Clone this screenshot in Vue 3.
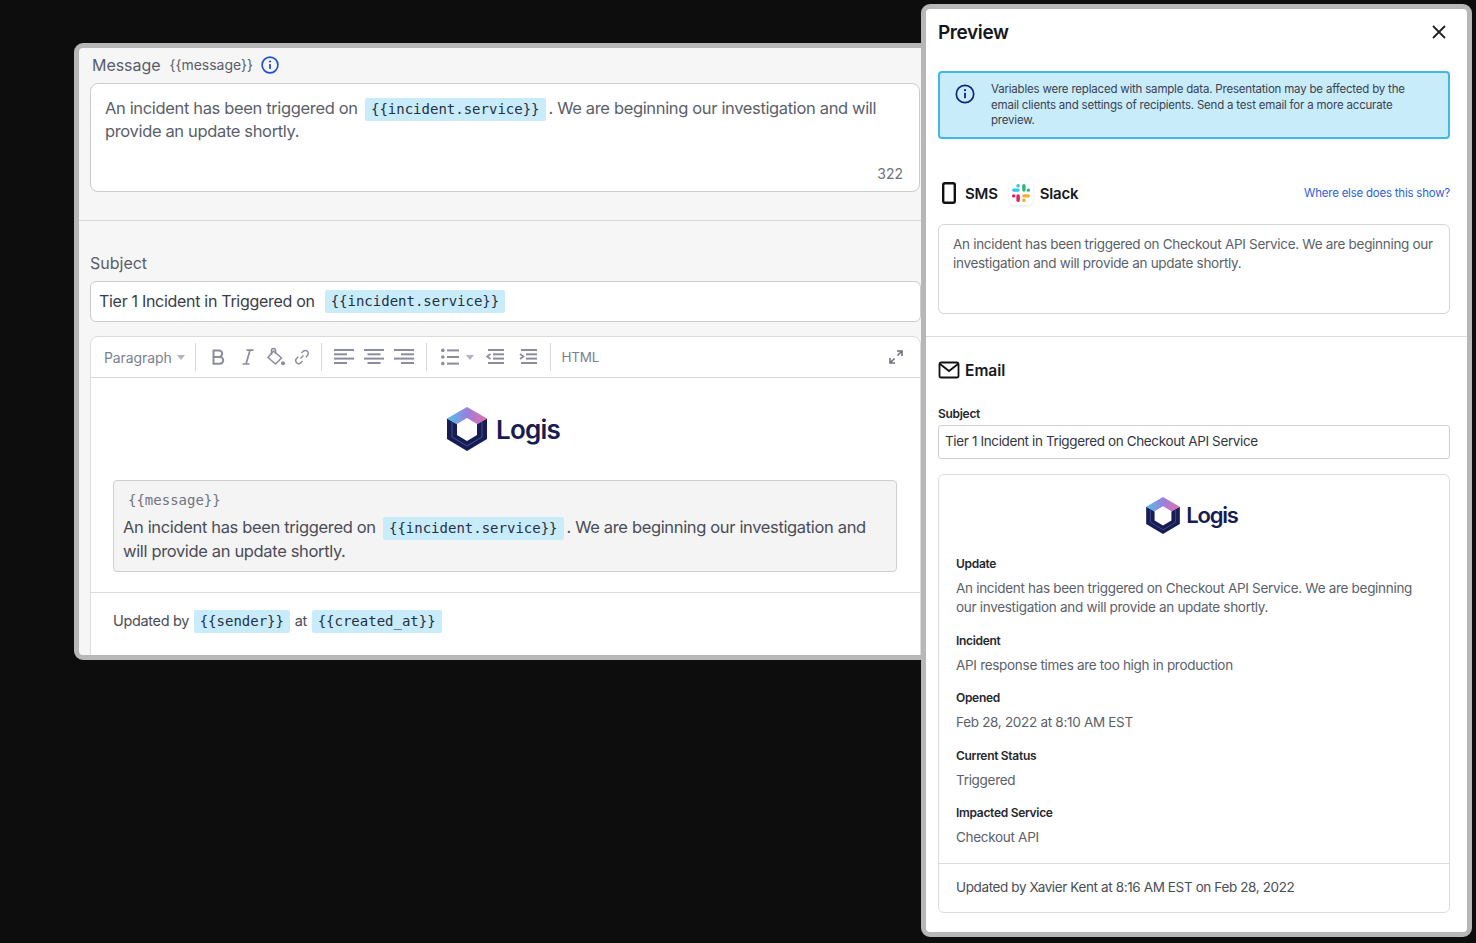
<script setup>
// mustache text has to come from script, the template parser would close on the braces
const MESSAGE = '{' + '{message}' + '}'
const SERVICE = '{' + '{incident.service}' + '}'
const SENDER = '{' + '{sender}' + '}'
const CREATED = '{' + '{created_at}' + '}'

const sections = [
  { label: 'Incident', text: 'API response times are too high in production' },
  { label: 'Opened', text: 'Feb 28, 2022 at 8:10 AM EST' },
  { label: 'Current Status', text: 'Triggered' },
  { label: 'Impacted Service', text: 'Checkout API' },
]
</script>

<template>
  <div class="stage">
    <!-- editor window -->
    <section class="editor-window">
      <div class="msg-head">
        <span class="msg-title">Message</span>
        <span class="msg-var">{{ MESSAGE }}</span>
        <svg class="info-blue" width="18" height="18" viewBox="0 0 18 18" fill="none">
          <circle cx="9" cy="9" r="7.9" stroke="#1f52c9" stroke-width="1.7" />
          <rect x="8.1" y="8" width="1.8" height="5" rx=".6" fill="#1f52c9" />
          <circle cx="9" cy="5.5" r="1.1" fill="#1f52c9" />
        </svg>
      </div>
      <div class="msg-box">
        <p class="msg-text">An incident has been triggered on <code class="token">{{ SERVICE }}</code>. We are beginning our investigation and will provide an update shortly.</p>
        <span class="counter">322</span>
      </div>
      <div class="divider"></div>
      <div class="subject-area">
        <label class="subject-label">Subject</label>
        <div class="subject-input"><span class="subj-text">Tier 1 Incident in Triggered on</span><code class="token">{{ SERVICE }}</code></div>
        <div class="editor">
          <div class="toolbar">
            <span class="tb-para">Paragraph</span>
            <span class="caret"></span>
            <i class="sep sep-1"></i>
            <svg class="ic ic-b" width="20" height="20" viewBox="0 0 20 20" fill="none" stroke="#8b8d9d" stroke-width="2"><path d="M5.5 3.5h5.5a3.2 3.2 0 0 1 0 6.4H5.5zM5.5 9.9h6.3a3.4 3.4 0 0 1 0 6.8H5.5z" /></svg>
            <svg class="ic ic-i" width="20" height="20" viewBox="0 0 20 20" fill="none" stroke="#8b8d9d" stroke-width="1.7"><path d="M8.5 3.2h7M4.5 17h7M12 3.2 8 17" /></svg>
            <svg class="ic ic-bucket" width="20" height="20" viewBox="0 0 20 20" fill="none" stroke="#8b8d9d" stroke-width="1.5"><path d="M7.5 4 15.5 11 9.5 17 2 10.5z" /><path d="M5.5 8V3.5a2 2 0 0 1 4 0V7" /><circle cx="17" cy="16.2" r="2" fill="#8b8d9d" stroke="none" /></svg>
            <svg class="ic ic-link" width="18" height="18" viewBox="0 0 18 18" fill="none" stroke="#8b8d9d" stroke-width="1.4"><path d="M7.5 10.5l3-3M8.5 5l1.7-1.7a2.9 2.9 0 0 1 4.2 4.2L12.9 9.3M9.5 13l-1.7 1.7a2.9 2.9 0 0 1-4.2-4.2L5.1 8.7" /></svg>
            <i class="sep sep-2"></i>
            <svg class="ic" width="20" height="18" viewBox="0 0 20 18" fill="#8b8d9d"><rect y="1" width="20" height="2" /><rect y="5.3" width="13" height="2" /><rect y="9.6" width="20" height="2" /><rect y="14" width="13" height="2" /></svg>
            <svg class="ic ic-gap" width="20" height="18" viewBox="0 0 20 18" fill="#8b8d9d"><rect y="1" width="20" height="2" /><rect x="3.5" y="5.3" width="13" height="2" /><rect y="9.6" width="20" height="2" /><rect x="3.5" y="14" width="13" height="2" /></svg>
            <svg class="ic ic-gap" width="20" height="18" viewBox="0 0 20 18" fill="#8b8d9d"><rect y="1" width="20" height="2" /><rect x="7" y="5.3" width="13" height="2" /><rect y="9.6" width="20" height="2" /><rect x="7" y="14" width="13" height="2" /></svg>
            <i class="sep sep-3"></i>
            <svg class="ic" width="18" height="18" viewBox="0 0 18 18" fill="#8b8d9d"><circle cx="1.8" cy="2.4" r="1.8" /><circle cx="1.8" cy="9" r="1.8" /><circle cx="1.8" cy="15.6" r="1.8" /><rect x="6" y="1.4" width="12" height="2" /><rect x="6" y="8" width="12" height="2" /><rect x="6" y="14.6" width="12" height="2" /></svg>
            <span class="caret caret-list"></span>
            <svg class="ic ic-out" width="18" height="18" viewBox="0 0 18 18" fill="#8b8d9d"><rect x="2" y="1" width="16" height="2" /><rect x="7" y="5.3" width="11" height="2" /><rect x="7" y="9.6" width="11" height="2" /><rect x="2" y="14" width="16" height="2" /><path d="M4.5 6 1 8.5 4.5 11" fill="none" stroke="#8b8d9d" stroke-width="1.6" /></svg>
            <svg class="ic ic-in" width="18" height="18" viewBox="0 0 18 18" fill="#8b8d9d"><rect x="2" y="1" width="16" height="2" /><rect x="7" y="5.3" width="11" height="2" /><rect x="7" y="9.6" width="11" height="2" /><rect x="2" y="14" width="16" height="2" /><path d="M1 6 4.5 8.5 1 11" fill="none" stroke="#8b8d9d" stroke-width="1.6" /></svg>
            <i class="sep sep-4"></i>
            <span class="tb-html">HTML</span>
            <svg class="ic ic-expand" width="14" height="14" viewBox="0 0 14 14" fill="none" stroke="#6f7280" stroke-width="1.6"><path d="M8 1h5v5M13 1 8.5 5.5M6 13H1V8M1 13l4.5-4.5" /></svg>
          </div>
          <div class="editor-body">
            <div class="logo logo-big">
              <svg width="40" height="44" viewBox="0 0 40 44">
                <defs>
                  <linearGradient id="hexBig" x1="0" y1="0" x2="1" y2="0">
                    <stop offset="0" stop-color="#4fc3e8" />
                    <stop offset=".5" stop-color="#9a7fe0" />
                    <stop offset="1" stop-color="#e56fa6" />
                  </linearGradient>
                </defs>
                <path d="M20 22 0 11.5V32l20 12 20-12V11.5z" fill="#171d52" />
                <path d="M0 11.5 20 0l20 11.5-10 6-10-6-10 6z" fill="url(#hexBig)" />
                <path d="M20 11l10 6v11l-10 6-10-6V17z" fill="#fff" />
                <path d="M5 15v15l15 9 15-9V15" fill="none" stroke="#5168b5" stroke-width=".7" />
              </svg>
              <span class="logo-word">Logis</span>
            </div>
            <div class="msg-block">
              <code class="block-var">{{ MESSAGE }}</code>
              <p class="block-text">An incident has been triggered on <code class="token">{{ SERVICE }}</code>. We are beginning our investigation and will provide an update shortly.</p>
            </div>
            <div class="editor-foot">
              Updated by <code class="token">{{ SENDER }}</code> at <code class="token">{{ CREATED }}</code>
            </div>
          </div>
        </div>
      </div>
    </section>

    <!-- preview panel -->
    <aside class="preview">
      <header class="pv-head">
        <h2>Preview</h2>
        <svg width="16" height="16" viewBox="0 0 16 16" fill="none" stroke="#222" stroke-width="1.8"><path d="M2 2l12 12M14 2 2 14" /></svg>
      </header>
      <div class="alert">
        <svg class="alert-ic" width="20" height="20" viewBox="0 0 20 20" fill="none">
          <circle cx="10" cy="10" r="8.7" stroke="#10257a" stroke-width="1.7" />
          <rect x="9.1" y="8.8" width="1.8" height="5.4" rx=".5" fill="#10257a" />
          <circle cx="10" cy="6.2" r="1.1" fill="#10257a" />
        </svg>
        <p>Variables were replaced with sample data. Presentation may be affected by the email clients and settings of recipients. Send a test email for a more accurate preview.</p>
      </div>
      <div class="channels">
        <svg width="14" height="22" viewBox="0 0 14 22" fill="none"><rect x="1.2" y="1.2" width="11.6" height="19.6" rx="1.8" stroke="#111" stroke-width="2.4" /></svg>
        <strong class="ch-sms">SMS</strong>
        <span class="slack-tile">
          <svg width="18" height="18" viewBox="0 0 18 18">
            <rect x="0" y="4.4" width="7.8" height="3.4" rx="1.7" fill="#36c5f0" />
            <rect x="4.4" y="0" width="3.4" height="3.4" rx="1.5" fill="#36c5f0" />
            <rect x="10.2" y="0" width="3.4" height="7.8" rx="1.7" fill="#2eb67d" />
            <rect x="14.6" y="4.4" width="3.4" height="3.4" rx="1.5" fill="#2eb67d" />
            <rect x="10.2" y="10.2" width="7.8" height="3.4" rx="1.7" fill="#ecb22e" />
            <rect x="10.2" y="14.6" width="3.4" height="3.4" rx="1.5" fill="#ecb22e" />
            <rect x="4.4" y="10.2" width="3.4" height="7.8" rx="1.7" fill="#e01e5a" />
            <rect x="0" y="10.2" width="3.4" height="3.4" rx="1.5" fill="#e01e5a" />
          </svg>
        </span>
        <strong class="ch-slack">Slack</strong>
        <a class="where">Where else does this show?</a>
      </div>
      <div class="sms-box">An incident has been triggered on Checkout API Service. We are beginning our investigation and will provide an update shortly.</div>
      <div class="pv-divider"></div>
      <div class="email-row">
        <svg width="22" height="18" viewBox="0 0 22 18" fill="none" stroke="#111" stroke-width="1.8"><rect x="1.5" y="1.5" width="19" height="15" rx="1.8" /><path d="M2 3l9 7 9-7" /></svg>
        <strong>Email</strong>
      </div>
      <div class="pv-label">Subject</div>
      <div class="pv-input"><span>Tier 1 Incident in Triggered on Checkout API Service</span></div>
      <div class="card">
        <div class="logo logo-small">
          <svg width="34" height="37" viewBox="0 0 40 44">
            <defs>
              <linearGradient id="hexSmall" x1="0" y1="0" x2="1" y2="0">
                <stop offset="0" stop-color="#4fc3e8" />
                <stop offset=".5" stop-color="#9a7fe0" />
                <stop offset="1" stop-color="#e56fa6" />
              </linearGradient>
            </defs>
            <path d="M20 22 0 11.5V32l20 12 20-12V11.5z" fill="#171d52" />
            <path d="M0 11.5 20 0l20 11.5-10 6-10-6-10 6z" fill="url(#hexSmall)" />
            <path d="M20 11l10 6v11l-10 6-10-6V17z" fill="#fff" />
            <path d="M5 15v15l15 9 15-9V15" fill="none" stroke="#5168b5" stroke-width=".7" />
          </svg>
          <span class="logo-word">Logis</span>
        </div>
        <div class="card-body">
          <div class="field">
            <div class="f-label">Update</div>
            <div class="f-text">An incident has been triggered on Checkout API Service. We are beginning our investigation and will provide an update shortly.</div>
          </div>
          <div class="field" v-for="s in sections" :key="s.label">
            <div class="f-label">{{ s.label }}</div>
            <div class="f-text">{{ s.text }}</div>
          </div>
        </div>
        <div class="card-foot"><span>Updated by Xavier Kent at 8:16 AM EST on Feb 28, 2022</span></div>
      </div>
    </aside>
  </div>
</template>

<style>
html, body { margin: 0; background: #0d0d0d; overflow: hidden; }
</style>

<style scoped>
.stage {
  position: relative;
  width: 1476px;
  height: 943px;
  overflow: hidden;
  background: #0d0d0d;
  font-family: Inter, "Liberation Sans", sans-serif;
  color: #565a66;
}
p { margin: 0; }
code, .token { font-family: "DejaVu Sans Mono", "Liberation Mono", monospace; }
.token {
  display: inline-block;
  padding: 0 6px;
  margin: 0 3px;
  height: 23px;
  line-height: 23px;
  font-size: 14px;
  letter-spacing: 0;
  border-radius: 2px;
  background: #c9ecfa;
  color: #263046;
  vertical-align: baseline;
}

/* left window */
.editor-window {
  position: absolute;
  left: 74px;
  top: 43px;
  width: 860px;
  height: 617px;
  box-sizing: border-box;
  border: 5px solid #b7b7b7;
  border-radius: 9px;
  background: #f6f6f6;
  overflow: hidden;
}
.msg-head {
  height: 35px;
  box-sizing: border-box;
  padding: 0 0 2px 13px;
  display: flex;
  align-items: center;
}
.msg-title { font-size: 16px; color: #5a5d68; letter-spacing: -.05px; }
.msg-var { font-size: 14px; margin-left: 9px; color: #5a5d68; }
.info-blue { margin-left: 8px; }
.msg-box {
  margin-left: 11px;
  width: 830px;
  height: 109px;
  box-sizing: border-box;
  border: 1px solid #cbccd0;
  border-radius: 8px;
  background: #fff;
  padding: 13px 16px 9px 14px;
  display: flex;
  flex-direction: column;
}
.msg-text { font-size: 16.5px; line-height: 23px; letter-spacing: -.35px; color: #5b5f6a; }
.msg-text .token { margin-top: -2px; margin-bottom: -2px; }
.counter { margin-top: auto; align-self: flex-end; font-size: 14px; color: #6e7179; }
.divider { margin-top: 28px; height: 1px; background: #d8d8d8; }
.subject-area { padding: 32px 0 0 11px; }
.subject-label { display: block; font-size: 16px; line-height: 20px; color: #5a5d68; }
.subject-input {
  margin-top: 8px;
  width: 831px;
  height: 41px;
  box-sizing: border-box;
  border: 1px solid #cbccd0;
  border-radius: 6px;
  background: #fff;
  display: flex;
  align-items: center;
  padding-left: 8px;
  font-size: 16px;
  letter-spacing: -.3px;
  color: #3a3d48;
}
.subj-text { margin-top: -2px; }
.subject-input .token { margin-left: 10px; }
.editor {
  margin-top: 14px;
  width: 831px;
  height: 400px;
  box-sizing: border-box;
  border: 1px solid #dcdcdf;
  border-radius: 8px 8px 0 0;
  background: #fff;
}
.toolbar {
  height: 41px;
  box-sizing: border-box;
  border-bottom: 1px solid #d8d8da;
  display: flex;
  align-items: center;
  padding-left: 13px;
  padding-right: 17px;
}
.tb-para { font-size: 14px; letter-spacing: -.1px; color: #7d8090; }
.tb-html { font-size: 13.5px; letter-spacing: -.3px; color: #7d8090; margin-left: 11px; }
.caret {
  width: 0;
  height: 0;
  margin-left: 5px;
  border-left: 4px solid transparent;
  border-right: 4px solid transparent;
  border-top: 5px solid #b2b4bf;
}
.caret-list { margin-left: 7px; }
.sep { width: 1px; height: 28px; background: #d8d8da; flex: none; }
.sep-1 { margin: 0 12px 0 10px; }
.ic { flex: none; }
.ic-b { margin-left: 0; }
.ic-i { margin-left: 10px; }
.ic-bucket { margin-left: 8px; }
.ic-link { margin-left: 7px; }
.sep-2 { margin: 0 12px 0 10px; }
.ic-gap { margin-left: 10px; }
.sep-3 { margin: 0 14px 0 12px; }
.ic-out { margin-left: 12px; }
.ic-in { margin-left: 15px; }
.sep-4 { margin-left: 13px; }
.ic-expand { margin-left: auto; }
.editor-body { padding-top: 29px; }
.logo { display: flex; align-items: center; justify-content: center; }
.logo-big { height: 44px; gap: 9px; margin-right: 4px; }
.logo-big .logo-word { font-size: 26px; letter-spacing: -.8px; margin-top: 1px; }
.logo-word { font-weight: 600; color: #171d52; }
.msg-block {
  margin: 29px 23px 0 22px;
  height: 92px;
  box-sizing: border-box;
  border: 1px solid #cfcfd3;
  border-radius: 4px;
  background: #f4f4f4;
  padding: 10px 9px 0;
}
.block-var { display: block; padding-left: 5px; font-size: 14px; line-height: 19px; color: #707480; }
.block-text { margin-top: 6px; font-size: 16.5px; line-height: 23.5px; letter-spacing: -.35px; color: #4a4d58; }
.editor-foot {
  margin-top: 20px;
  padding: 17px 0 0 22px;
  border-top: 1px solid #dcdcdf;
  font-size: 14.5px;
  letter-spacing: -.35px;
  color: #4a4d58;
}
.editor-foot .token { margin: 0 1px; }

/* right panel */
.preview {
  position: absolute;
  left: 921px;
  top: 4px;
  width: 551px;
  height: 933px;
  box-sizing: border-box;
  border: 5px solid #b7b7b7;
  border-radius: 9px;
  background: #fff;
  padding: 0 17px 0 12px;
  overflow: hidden;
}
.pv-head {
  height: 46px;
  display: flex;
  align-items: center;
  justify-content: space-between;
  padding-right: 3px;
}
.pv-head h2 { margin: 0; font-size: 19px; letter-spacing: -.4px; font-weight: 600; color: #15171c; }
.alert {
  margin-top: 16px;
  width: 512px;
  height: 68px;
  box-sizing: border-box;
  border: 2px solid #3fb8e2;
  border-radius: 4px;
  background: #c9ecfa;
  display: flex;
  padding: 9px 27px 0 15px;
}
.alert-ic { flex: none; margin-top: 2px; }
.alert p { margin-left: 16px; font-size: 11.5px; line-height: 15.5px; letter-spacing: -.2px; color: #3a4150; }
.channels {
  margin-top: 39px;
  width: 512px;
  height: 30px;
  display: flex;
  align-items: center;
  padding-left: 4px;
  box-sizing: border-box;
  color: #17191f;
  font-size: 15px;
  letter-spacing: -.2px;
}
.channels strong { font-weight: 600; }
.ch-sms { margin-left: 9px; }
.slack-tile {
  margin-left: 11px;
  width: 24px;
  height: 24px;
  display: flex;
  align-items: center;
  justify-content: center;
  border-radius: 5px;
  background: #fff;
  box-shadow: 0 1px 3px rgba(0, 0, 0, .1);
}
.ch-slack { margin-left: 7px; }
.where { margin-left: auto; font-size: 11.5px; letter-spacing: -.23px; color: #2f62d8; }
.sms-box {
  margin-top: 16px;
  width: 512px;
  height: 90px;
  box-sizing: border-box;
  border: 1px solid #d6d6d9;
  border-radius: 6px;
  padding: 10px 14px;
  font-size: 13.5px;
  line-height: 19px;
  letter-spacing: -.3px;
  color: #5b5f6a;
}
.pv-divider { margin: 22px -17px 0 -12px; height: 1px; background: #dcdcdf; }
.email-row {
  margin-top: 22px;
  height: 22px;
  display: flex;
  align-items: center;
  gap: 5px;
  font-size: 15.5px;
  color: #17191f;
}
.email-row strong { font-weight: 600; }
.pv-label { margin-top: 25px; font-size: 12px; line-height: 16px; letter-spacing: -.3px; font-weight: 600; color: #26282f; }
.pv-input {
  margin-top: 3px;
  width: 512px;
  height: 34px;
  box-sizing: border-box;
  border: 1px solid #cfcfd3;
  border-radius: 3px;
  display: flex;
  align-items: center;
  padding: 0 0 2px 6px;
  font-size: 13.5px;
  letter-spacing: -.37px;
  color: #33363f;
}
.card {
  margin-top: 15px;
  width: 512px;
  height: 439px;
  box-sizing: border-box;
  border: 1px solid #dcdcdf;
  border-radius: 6px;
  display: flex;
  flex-direction: column;
}
.logo-small { margin-top: 22px; margin-right: 4px; height: 37px; gap: 6px; }
.logo-small .logo-word { font-size: 22px; letter-spacing: -1.2px; margin-top: -2px; }
.card-body { padding: 22px 17px 0; display: flex; flex-direction: column; gap: 15.5px; }
.f-label { font-size: 12px; line-height: 16px; letter-spacing: -.3px; font-weight: 600; color: #26282f; }
.f-text { margin-top: 7px; font-size: 13.5px; line-height: 19px; letter-spacing: -.3px; color: #5b5f6a; }
.card-foot {
  margin-top: auto;
  height: 49px;
  box-sizing: border-box;
  border-top: 1px solid #dcdcdf;
  display: flex;
  align-items: center;
  padding: 0 0 3px 17px;
  font-size: 13.5px;
  letter-spacing: -.38px;
  color: #4a4d58;
}
</style>
